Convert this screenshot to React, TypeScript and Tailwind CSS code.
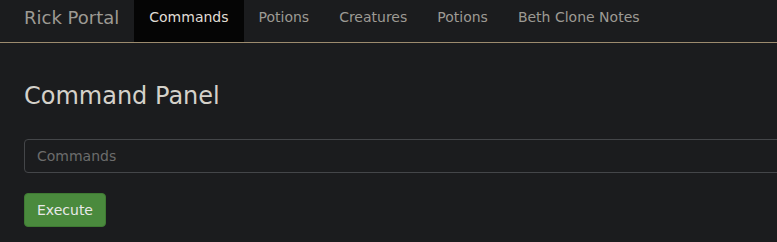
const links = [
  { label: "Commands", active: true },
  { label: "Potions" },
  { label: "Creatures" },
  { label: "Potions" },
  { label: "Beth Clone Notes" },
];

export default function App() {
  return (
    <div className="min-h-[242px] overflow-hidden bg-[#1b1c1e] font-['DejaVu_Sans',sans-serif] text-[#c8c8c8]">
      <nav className="flex h-[43px] items-stretch border-b border-[#9c8b6e] bg-[#1b1c1e] pl-[9px]">
        <a className="flex items-center px-[15px] pb-[8px] text-[18px] text-[#9d9a94]">Rick Portal</a>
        <ul className="flex items-stretch">
          {links.map((l, i) => (
            <li key={i} className="flex">
              <a
                className={[
                  "flex items-center px-[15px] pb-[7px] text-[14px]",
                  l.active ? "bg-[#050505] text-[#e0ddd6]" : "text-[#9d9a94]",
                ].join(" ")}
              >
                {l.label}
              </a>
            </li>
          ))}
        </ul>
      </nav>

      <main className="px-[24px]">
        <h1 className="mt-[39px] text-[24px] leading-[28px] text-[#d4d1ca]">Command Panel</h1>
        <input
          placeholder="Commands"
          className="mt-[29px] block h-[34px] w-[800px] rounded-[4px] border border-[#444649] bg-[#1b1c1e] px-[12px] text-[14px] text-[#ccc] placeholder:text-[#6c6c6c] outline-none"
        />
        <button className="mt-[20px] h-[34px] rounded-[4px] border border-[#3f7a33] bg-[#4a8a3d] px-[12px] text-[14px] text-[#e8e8e8]">
          Execute
        </button>
      </main>
    </div>
  );
}
